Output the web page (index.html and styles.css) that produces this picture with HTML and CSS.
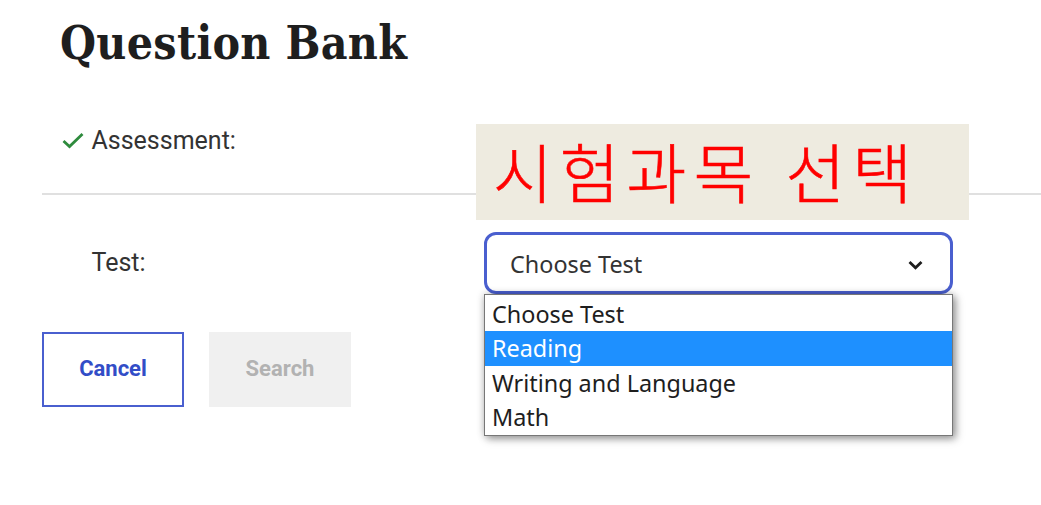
FILE: index.html
```html
<!DOCTYPE html>
<html lang="en">
<head>
  <meta charset="UTF-8">
  <meta name="viewport" content="width=device-width, initial-scale=1.0">
  <title>Question Bank</title>
  <link rel="stylesheet" href="styles.css">
</head>
<body>
  <main class="question-bank">
    <h1>Question Bank</h1>

    <div class="row assessment-row">
      <div class="label">
        <svg class="check" viewBox="0 0 22 17" width="22" height="17">
          <path d="M1.5 9 L7.5 14.5 L20.5 2"/>
        </svg>
        <span>Assessment:</span>
      </div>
      <div class="note" lang="ko"><span>시험과목 선택</span></div>
    </div>

    <div class="row test-row">
      <div class="label"><span>Test:</span></div>
      <div class="dropdown">
        <div class="select" role="combobox" aria-expanded="true" tabindex="0">
          <span>Choose Test</span>
          <svg class="arrow" viewBox="0 0 15 10" width="15" height="10">
            <path d="M1.5 2 L7.5 7.8 L13.5 2"/>
          </svg>
        </div>
        <ul class="options" role="listbox">
          <li role="option">Choose Test</li>
          <li role="option" class="active">Reading</li>
          <li role="option">Writing and Language</li>
          <li role="option">Math</li>
        </ul>
      </div>
    </div>

    <div class="buttons">
      <button class="cancel">Cancel</button>
      <button class="search" disabled>Search</button>
    </div>
  </main>
</body>
</html>
```
FILE: styles.css
```css
* {
  box-sizing: border-box;
}
body {
  margin: 0;
  background: #ffffff;
  color: #333333;
  font-family: Roboto, sans-serif;
  font-size: 25px;
}
.question-bank {
  min-height: 100vh;
  padding-left: 42px;
}
h1 {
  margin: 0;
  padding: 12px 0 0 18px;
  height: 88px;
  color: #1e1e1e;
  font-family: "DejaVu Serif Condensed", "DejaVu Serif", serif;
  font-stretch: condensed;
  font-size: 46px;
  line-height: 63px;
  font-weight: bold;
  letter-spacing: 0.3px;
  white-space: nowrap;
}
.row {
  display: grid;
  grid-template-columns: 442px 469px;
}
.assessment-row {
  position: relative;
  height: 107px;
  border-bottom: 2px solid #e0e0e0;
}
.test-row {
  padding-top: 37px;
  height: 137px;
}
.label {
  display: flex;
  align-items: center;
  height: 61px;
  padding-left: 49.5px;
}
.assessment-row .label {
  height: 104px;
  padding-left: 19.5px;
  gap: 8px;
}
.check {
  fill: none;
  stroke: #2e8b3d;
  stroke-width: 2.8;
}
.note {
  position: absolute;
  left: 434px;
  top: 36px;
  width: 493px;
  height: 96px;
  padding-left: 17px;
  background: #eeebe0;
  color: #ff0000;
  font-family: "Noto Sans CJK KR", sans-serif;
  font-size: 65px;
  font-weight: 300;
  line-height: 92px;
  letter-spacing: 7px;
  white-space: nowrap;
  -webkit-text-stroke: 0.6px #ff0000;
}
.dropdown {
  position: relative;
  font-family: "Noto Sans", sans-serif;
  font-size: 23.4px;
}
.select {
  display: flex;
  align-items: center;
  justify-content: space-between;
  height: 62px;
  padding: 1px 27px 0 23px;
  border: 3px solid #4a5fcf;
  border-radius: 12px;
}
.arrow {
  margin-top: 3px;
  fill: none;
  stroke: #1e1e1e;
  stroke-width: 2.8;
}
.options {
  position: absolute;
  top: 62px;
  left: 0;
  width: 469px;
  margin: 0;
  padding: 2px 0 0;
  list-style: none;
  background: #ffffff;
  border: 1.5px solid #777777;
  box-shadow: 3px 3px 8px rgba(0, 0, 0, 0.35), 0 0 8px rgba(0, 0, 0, 0.2);
  color: #1e1e1e;
}
.options li {
  height: 34.4px;
  padding-left: 7px;
  line-height: 34.6px;
}
.options .active {
  background: #1e90ff;
  color: #ffffff;
}
.buttons {
  display: flex;
  gap: 25px;
}
.buttons button {
  width: 142px;
  height: 75px;
  padding: 0 0 3px;
  font-family: Roboto, sans-serif;
  font-size: 22px;
  font-weight: bold;
}
.cancel {
  background: #ffffff;
  border: 2px solid #4a5fcf;
  color: #324dc7;
}
.search {
  background: #f0f0f0;
  border: none;
  color: #b2b2b2;
}
```
